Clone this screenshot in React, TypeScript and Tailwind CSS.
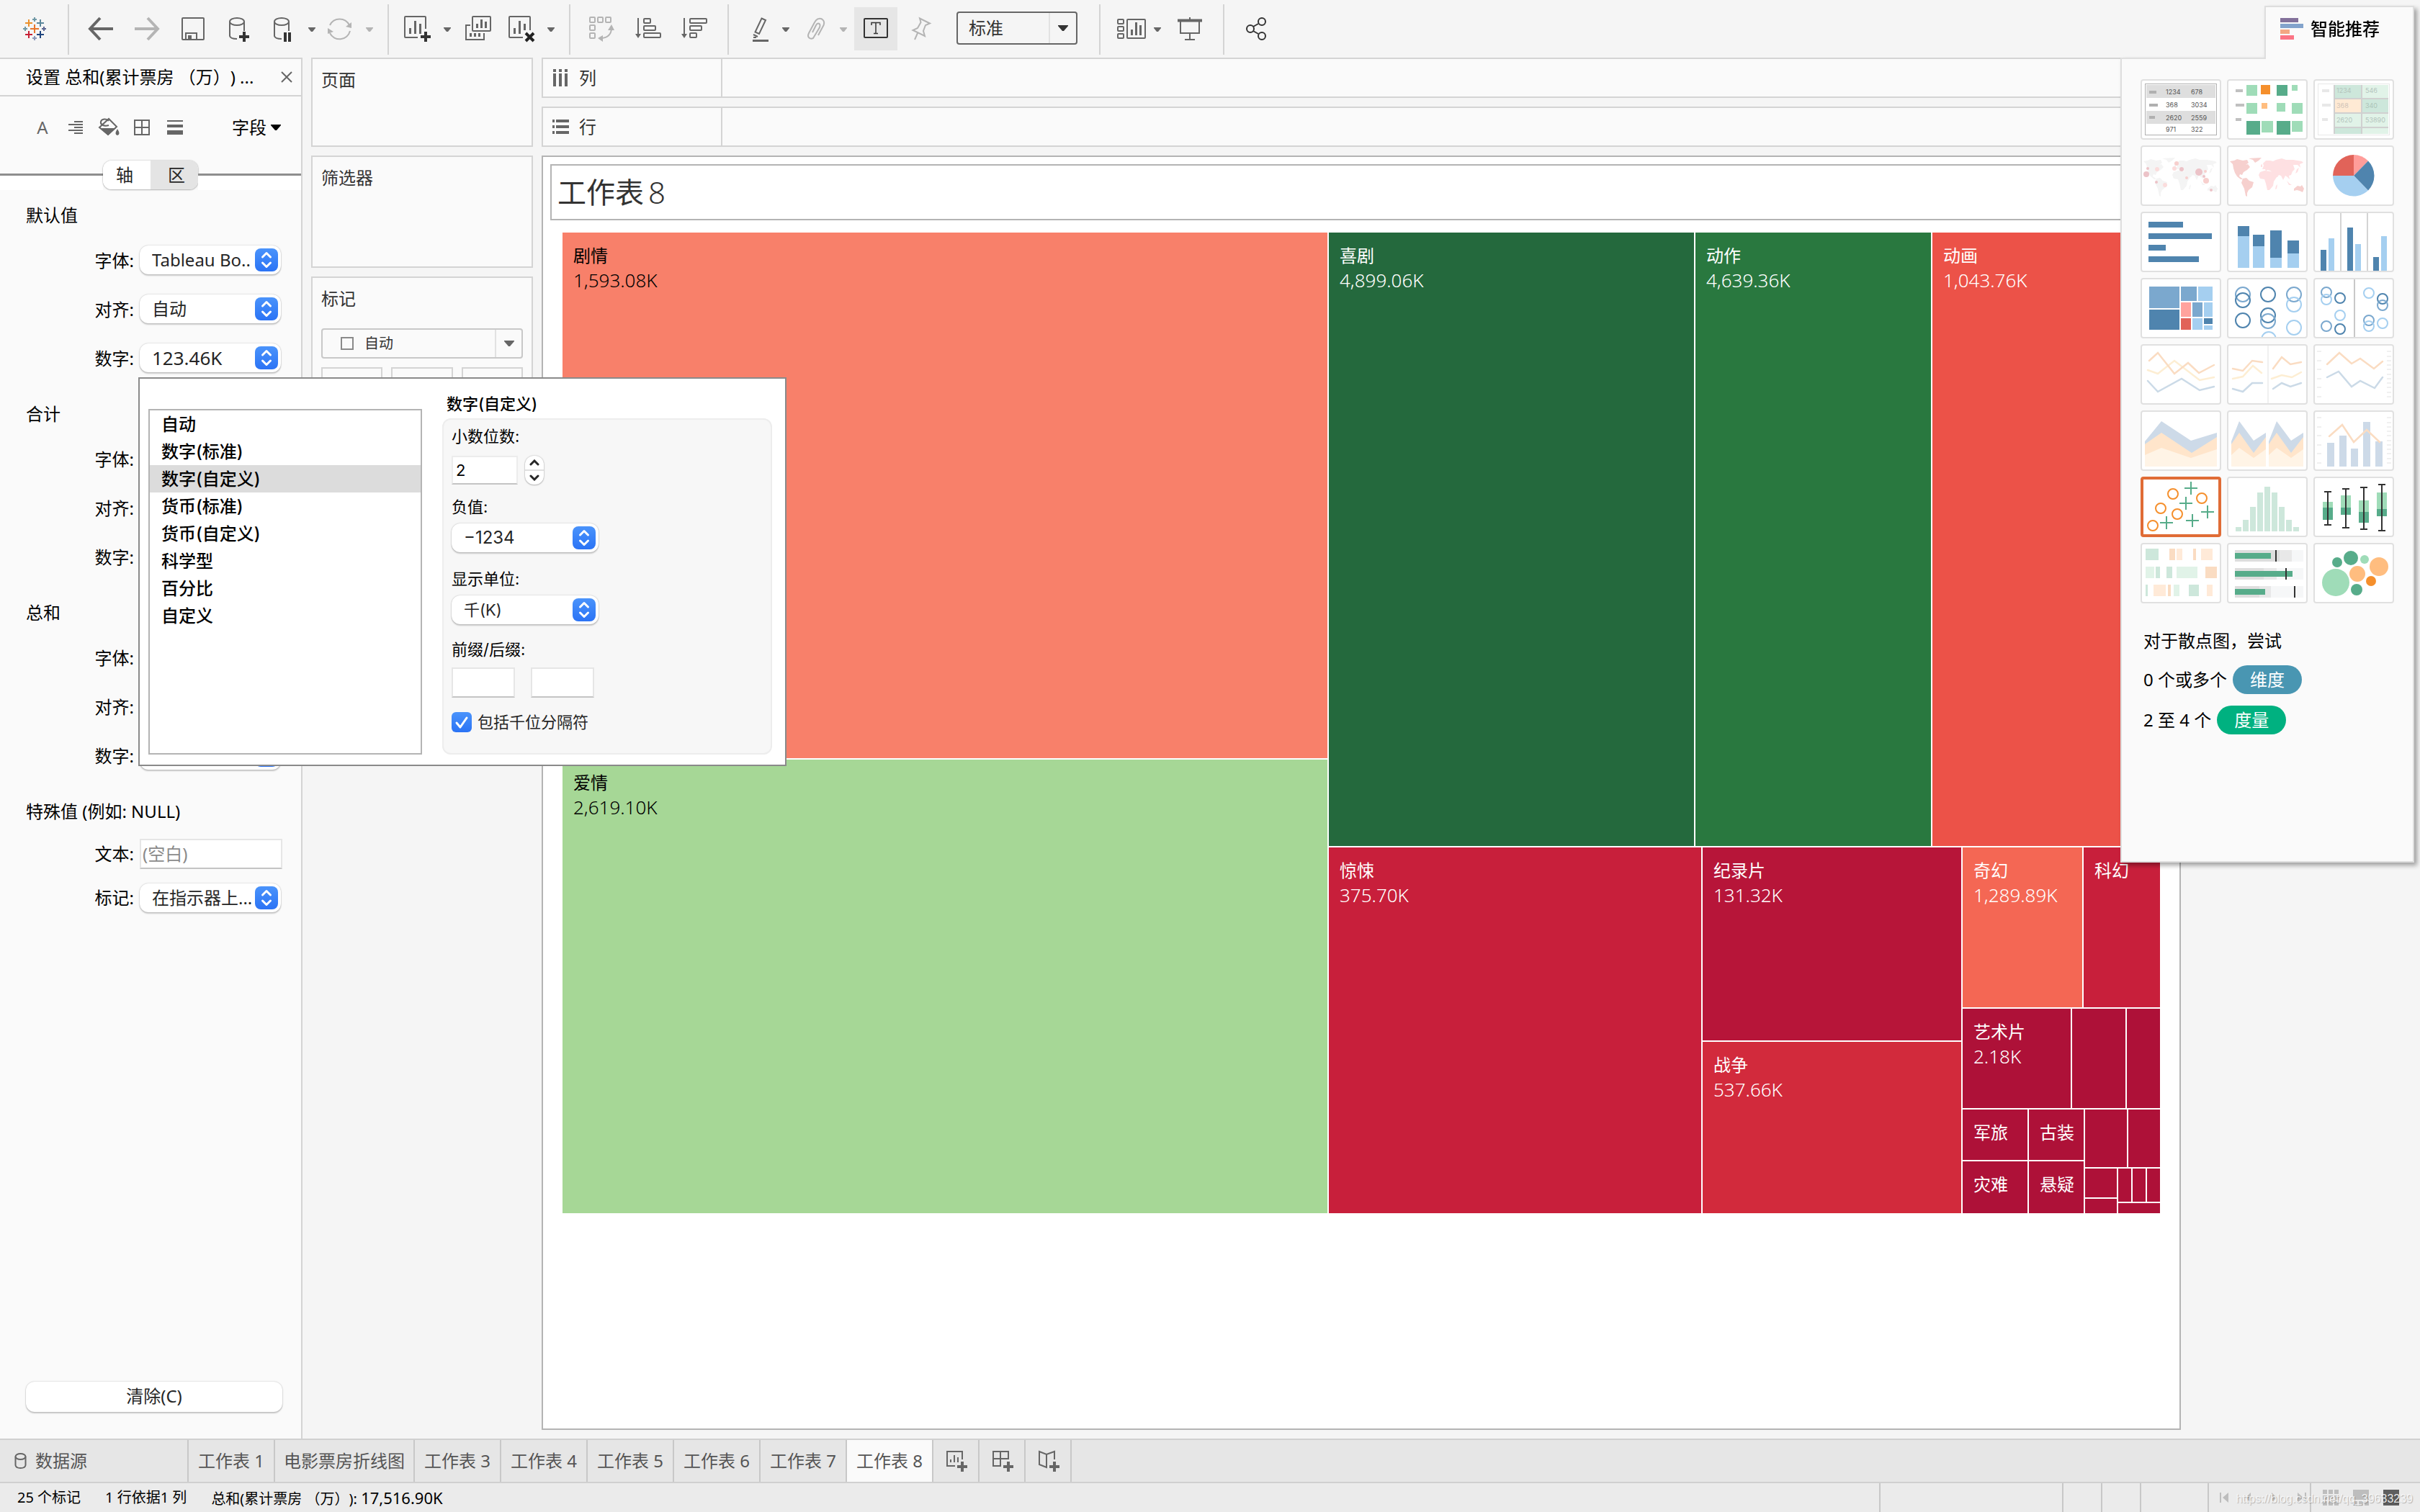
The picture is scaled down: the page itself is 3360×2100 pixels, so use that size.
import React, { useState } from 'react';

const GREY = '#666666';
const LIGHT = '#b4b4b4';
const DARK = '#333333';

/* ---------- toolbar ---------- */

function Tool({ x, w, label, active, children }: { x: number; w: number; label: string; active?: boolean; children: React.ReactNode }) {
  return (
    <button type="button" aria-label={label} className={active ? 'my-2.5 h-15 overflow-hidden bg-[#e6e6e6]' : 'h-20'}>
      <svg width={w} height={active ? 60 : 80} viewBox={active ? `${x} 10 ${w} 60` : `${x} 0 ${w} 80`} fill="none" stroke={GREY} strokeWidth="2">
        {children}
      </svg>
    </button>
  );
}

function Caret({ x, w, cx, color = GREY }: { x: number; w: number; cx: number; color?: string }) {
  return (
    <Tool x={x} w={w} label="更多选项">
      <path d={`M${cx - 5} 38h10v1l-4 5h-2l-4-5z`} fill={color} stroke="none" />
    </Tool>
  );
}

const Separator = () => <div className="mt-1.5 h-[70px] w-0.5 bg-[#d4d4d4]" />;

const logoPluses: [number, number, number, number, string][] = [
  [48, 40, 6, 2, '#e8762c'],
  [40, 32, 5, 2, '#eb912c'],
  [56, 32, 5, 2, '#5b879b'],
  [40, 48, 5, 2, '#c72035'],
  [56, 48, 5, 2, '#1f457e'],
  [48, 27, 3, 2, '#7099a6'],
  [48, 53, 3, 2, '#8b97b9'],
  [35, 40, 3, 2, '#7099a6'],
  [61, 40, 3, 2, '#5c6692'],
];

function Toolbar() {
  return (
    <header className="flex h-20 shrink-0 items-start bg-[#f5f5f5]">
      <Tool x={0} w={94} label="起始页">
        {logoPluses.map(([x, y, r, s, c]) => (
          <path key={`${x}-${y}`} d={`M${x - r} ${y}h${2 * r}M${x} ${y - r}v${2 * r}`} stroke={c} strokeWidth={s} />
        ))}
      </Tool>
      <Separator />
      <Tool x={96} w={76} label="撤消">
        <path d="M157 40H126M139 25L125 40L139 55" strokeWidth="4" />
      </Tool>
      <Tool x={172} w={64} label="重做">
        <path d="M187 40H218M205 25L219 40L205 55" strokeWidth="4" stroke={LIGHT} />
      </Tool>
      <Tool x={236} w={64} label="保存">
        <rect x="253" y="25" width="30" height="30" rx="1" />
        <path d="M258 55V46H273V55" />
        <path d="M261 49h5v5h-5z" fill={GREY} stroke="none" />
      </Tool>
      <Tool x={300} w={64} label="新建数据源">
        <ellipse cx="329" cy="30" rx="10" ry="5" />
        <path d="M319 30V50Q320 54 329 54M339 30V43" />
        <path d="M339 44v14M332 51h14" stroke={DARK} strokeWidth="4" />
      </Tool>
      <Tool x={364} w={56} label="暂停自动更新">
        <ellipse cx="391" cy="30" rx="10" ry="5" />
        <path d="M381 30V50Q382 54 391 54M401 30V43" />
        <path d="M396 45v13M402 45v13" stroke={DARK} strokeWidth="4" />
      </Tool>
      <Caret x={420} w={26} cx={433} />
      <Tool x={446} w={52} label="运行更新">
        <path d="M458 35A15 15 0 0 1 485 35M486 43A15 15 0 0 1 458 46" stroke={LIGHT} />
        <path d="M488 31v8l-8-2zM455 39v8l8-3z" fill={LIGHT} stroke="none" />
      </Tool>
      <Caret x={498} w={40} cx={513} color={LIGHT} />
      <Separator />
      <Tool x={540} w={68} label="新建工作表">
        <path d="M580 52H563Q562 52 562 51V24Q562 23 563 23H590Q591 23 591 24V40" />
        <path d="M569.500 39v8M576.500 29v18M583.500 33v14" strokeWidth="3" />
        <path d="M591 44v14M584 51h14" stroke={DARK} strokeWidth="4" />
      </Tool>
      <Caret x={608} w={26} cx={621} />
      <Tool x={634} w={60} label="复制工作表">
        <rect x="656" y="23" width="25" height="20" rx="1" />
        <path d="M662.500 33v6M668.500 27v12M674.500 30v9M653.500 46v5M659.500 46v5M665.500 46v5" strokeWidth="3" />
        <path d="M653 35H647V55H672V46" />
      </Tool>
      <Tool x={694} w={58} label="清除工作表">
        <path d="M726 52H708Q707 52 707 51V24Q707 23 708 23H735Q736 23 736 24V42" />
        <path d="M714.500 39v8M721.500 29v18M728.500 33v9" strokeWidth="3" />
        <path d="M730 46l11 11M741 46l-11 11" stroke="#222222" strokeWidth="4" />
      </Tool>
      <Caret x={752} w={38} cx={765} />
      <Separator />
      <Tool x={792} w={76} label="交换行和列">
        <g stroke={LIGHT}>
          <rect x="819" y="24" width="7" height="7" rx="1" />
          <rect x="830" y="24" width="7" height="7" rx="1" />
          <rect x="841" y="24" width="7" height="7" rx="1" />
          <rect x="819" y="35" width="7" height="7" rx="1" />
          <rect x="819" y="46" width="7" height="7" rx="1" />
          <path d="M849 40Q848 52 835 53" />
        </g>
        <path d="M849 34l4 8h-9zM830 53l7-4v9z" fill={LIGHT} stroke="none" />
      </Tool>
      <Tool x={868} w={64} label="升序排序">
        <path d="M886 25V50" />
        <path d="M882 47h8l-4 6z" fill={GREY} stroke="none" />
        <rect x="894" y="26" width="9" height="6" rx="1" />
        <rect x="894" y="36" width="16" height="6" rx="1" />
        <rect x="894" y="46" width="23" height="6" rx="1" />
      </Tool>
      <Tool x={932} w={78} label="降序排序">
        <path d="M950 25V50" />
        <path d="M946 47h8l-4 6z" fill={GREY} stroke="none" />
        <rect x="958" y="26" width="23" height="6" rx="1" />
        <rect x="958" y="36" width="16" height="6" rx="1" />
        <rect x="958" y="46" width="9" height="6" rx="1" />
      </Tool>
      <Separator />
      <Tool x={1012} w={66} label="突出显示">
        <path d="M1057.500 25.500L1063 28L1054 47L1048.500 44.500Z" />
        <path d="M1046 48l6 3M1046 52h4" />
        <path d="M1045 56.500h22" strokeWidth="3" />
      </Tool>
      <Caret x={1078} w={26} cx={1091} />
      <Tool x={1104} w={52} label="组成员">
        <path d="M1136 49L1143.500 35C1146 29 1141 25 1137 26C1134 26 1133 28 1131 31L1123 46C1120 52 1125 55 1129 53L1138 38C1140 32 1135 31 1133 35L1128 45" stroke={LIGHT} />
      </Tool>
      <Caret x={1156} w={30} cx={1171} color={LIGHT} />
      <Tool x={1186} w={60} label="显示标记标签" active>
        <rect x="1200" y="26" width="32" height="26" rx="1" stroke={DARK} />
        <path d="M1210 35v-3.500h12v3.500M1216 31.500v15M1213 46.500h6" stroke={DARK} strokeWidth="1.500" />
      </Tool>
      <Tool x={1246} w={66} label="固定轴">
        <path d="M1277 25.500L1291 32.500L1285 35L1282 43L1284 50L1267.500 42L1274 39L1278.500 31ZM1274 46L1270 55" stroke={LIGHT} />
      </Tool>
      <div className="mt-4 mr-[30px] ml-4 grid h-[46px] w-[168px] rounded-sm border-2 border-[#666666]">
        <select aria-label="适合" className="appearance-none pl-[15px] text-2xl leading-none text-[#333333] [grid-area:1/1]">
          <option>标准</option>
        </select>
        <div className="pointer-events-none flex w-[38px] items-center justify-center justify-self-end border-l-2 border-[#e2e2e2] [grid-area:1/1]">
          <svg width="14" height="8" viewBox="0 0 14 8" aria-hidden="true">
            <path d="M0 0h14v1L8 8H6L0 1z" fill={DARK} />
          </svg>
        </div>
      </div>
      <Separator />
      <Tool x={1528} w={70} label="显示/隐藏卡">
        <rect x="1552" y="27" width="8" height="6" rx="1" />
        <rect x="1552" y="37" width="8" height="6" rx="1" />
        <rect x="1552" y="47" width="8" height="6" rx="1" />
        <rect x="1565" y="27" width="25" height="26" rx="1" />
        <path d="M1571.500 41v8M1577.500 31v18M1583.500 35v14" strokeWidth="3" />
      </Tool>
      <Caret x={1598} w={24} cx={1607} />
      <Tool x={1622} w={76} label="演示模式">
        <path d="M1635 28.500h34" strokeWidth="4" />
        <path d="M1652 24v4M1639 30V46H1665V30M1652 46V54M1645 55H1659" />
      </Tool>
      <Separator />
      <Tool x={1700} w={90} label="共享">
        <g stroke={DARK}>
          <circle cx="1736" cy="40" r="5" />
          <circle cx="1752" cy="30" r="5" />
          <circle cx="1752" cy="50" r="5" />
          <path d="M1740 37L1747 33M1740 43L1747 47" />
        </g>
      </Tool>
    </header>
  );
}

/* ---------- form controls ---------- */

function Chevrons() {
  return (
    <span className="pointer-events-none mr-1 flex h-8 w-8 items-center justify-center self-center justify-self-end rounded-lg bg-linear-to-b from-[#4a93fb] to-[#2b73f5] [grid-area:1/1]">
      <svg width="16" height="24" viewBox="0 0 16 24" fill="none" stroke="#ffffff" strokeWidth="3" strokeLinecap="round" strokeLinejoin="round" aria-hidden="true">
        <path d="M2.500 8L8 2.500L13.500 8M2.500 16L8 21.500L13.500 16" />
      </svg>
    </span>
  );
}

function Select({ id, value, options = [], wide, size = 'text-2xl' }: { id: string; value: string; options?: string[]; wide?: boolean; size?: string }) {
  return (
    <div className={`grid h-10 rounded-xl bg-white shadow-[0_0_2px_rgba(0,0,0,0.28),0_2px_2px_rgba(0,0,0,0.18)] ${wide ? 'w-51' : 'w-49'}`}>
      <select id={id} className={`w-full appearance-none truncate rounded-xl pr-8 pl-[17px] leading-none text-[#262626] [grid-area:1/1] ${size}`}>
        <option>{value}</option>
        {options.map((o) => (
          <option key={o}>{o}</option>
        ))}
      </select>
      <Chevrons />
    </div>
  );
}

function Row({ label, id, children }: { label: string; id: string; children: React.ReactNode }) {
  return (
    <div className="flex h-17 items-center gap-2">
      <label htmlFor={id} className="w-[186px] pt-0.5 text-right">
        {label}
      </label>
      {children}
    </div>
  );
}

function Section({ title, name }: { title: string; name: string }) {
  return (
    <section className="pb-4">
      <h3 className="flex h-14 items-center pl-9">{title}</h3>
      <Row label="字体:" id={`${name}-font`}>
        <Select id={`${name}-font`} value="Tableau Bo.." />
      </Row>
      <Row label="对齐:" id={`${name}-align`}>
        <Select id={`${name}-align`} value="自动" />
      </Row>
      <Row label="数字:" id={`${name}-number`}>
        <Select id={`${name}-number`} value="123.46K" size="text-[26px]" />
      </Row>
    </section>
  );
}

function FormatPane() {
  return (
    <aside className="flex w-[420px] shrink-0 flex-col border-t-2 border-r-2 border-[#d4d4d4] bg-[#fafafa] text-2xl leading-none text-black">
      <div className="flex h-13 shrink-0 items-center justify-between border-b-2 border-[#d4d4d4] pr-3 pl-9">
        <h2 className="whitespace-pre">设置 总和(累计票房 （万）) ...</h2>
        <button type="button" aria-label="关闭">
          <svg width="16" height="16" viewBox="0 0 16 16" stroke={GREY} strokeWidth="2">
            <path d="M1 1l14 14M15 1L1 15" />
          </svg>
        </button>
      </div>
      <div className="flex h-[86px] shrink-0 items-center justify-between pr-7 pl-11">
        <div className="flex items-center gap-4">
          <button type="button" aria-label="字体" className="w-[30px] text-[#666666]">
            A
          </button>
          <button type="button" aria-label="对齐">
            <svg width="30" height="30" viewBox="0 0 30 30" stroke={GREY} strokeWidth="2">
              <path d="M13 7h12M5 11h20M13 15h12M5 19h20M13 23h12" />
            </svg>
          </button>
          <button type="button" aria-label="阴影">
            <svg width="30" height="30" viewBox="0 0 30 30" fill="none" stroke={GREY} strokeWidth="2">
              <path d="M2 15L15 3L26 14L14 25ZM15 12C8 14 3 11 4 7C5 3 12 2 15 6" />
              <path d="M3 16h22L14 26zM27 17q5 8 0 9q-5-1 0-9" fill={GREY} stroke="none" />
            </svg>
          </button>
          <button type="button" aria-label="边框">
            <svg width="30" height="30" viewBox="0 0 30 30" fill="none" stroke={GREY} strokeWidth="2">
              <path d="M5 5h20v20H5zM15 5v20M5 15h20" />
            </svg>
          </button>
          <button type="button" aria-label="线">
            <svg width="30" height="30" viewBox="0 0 30 30" fill={GREY}>
              <path d="M4 5h22v2H4zM4 11h22v4H4zM4 19h22v6H4z" />
            </svg>
          </button>
        </div>
        <button type="button" className="flex items-center gap-1.5">
          字段
          <svg width="14" height="8" viewBox="0 0 14 8" aria-hidden="true">
            <path d="M0 0h14v1L8 8H6L0 1z" />
          </svg>
        </button>
      </div>
      <div className="flex h-11 shrink-0">
        <div className="flex flex-1 flex-col">
          <div className="h-6 border-b-3 border-[#8e8e8e]" />
          <div className="flex-1 bg-white" />
        </div>
        <div className="mt-[3px] mb-px flex w-[132px] overflow-hidden rounded-xl bg-white text-[#262626] shadow-[0_0_2px_rgba(0,0,0,0.35),0_1px_2px_rgba(0,0,0,0.2)]">
          <button type="button" className="flex-1 bg-white pr-1.5">
            轴
          </button>
          <button type="button" className="flex-1 bg-[#e4e4e4] pl-1.5">
            区
          </button>
        </div>
        <div className="flex flex-1 flex-col">
          <div className="h-6 border-b-3 border-[#8e8e8e]" />
          <div className="flex-1 bg-white" />
        </div>
      </div>
      <div className="pt-[7px]">
        <Section title="默认值" name="default" />
        <Section title="合计" name="total" />
        <Section title="总和" name="grand" />
        <section>
          <h3 className="flex h-14 items-center pl-9">特殊值 (例如: NULL)</h3>
          <div className="flex h-[61px] items-center gap-2">
            <label htmlFor="null-text" className="w-[186px] text-right">
              文本:
            </label>
            <input
              id="null-text"
              placeholder="(空白)"
              className="h-[42px] w-[198px] border-2 border-[#e6e6e6] border-b-[#c4c4c4] bg-white px-0.5 placeholder:text-[#8a8a8a]"
            />
          </div>
          <div className="flex h-[61px] items-center gap-2">
            <label htmlFor="null-mark" className="w-[186px] text-right">
              标记:
            </label>
            <Select id="null-mark" value="在指示器上..." />
          </div>
        </section>
      </div>
      <button
        type="button"
        className="mt-auto mr-[26px] mb-[37px] ml-9 h-[42px] rounded-xl bg-white pb-0.5 text-[#262626] shadow-[0_0_2px_rgba(0,0,0,0.28),0_2px_2px_rgba(0,0,0,0.18)]"
      >
        清除(C)
      </button>
    </aside>
  );
}

/* ---------- cards and shelves ---------- */

function Card({ title, className, children }: { title: string; className: string; children?: React.ReactNode }) {
  return (
    <section className={`shrink-0 border-2 border-[#d4d4d4] bg-[#fafafa] px-3 pt-[17px] ${className}`}>
      <h3 className="leading-6">{title}</h3>
      {children}
    </section>
  );
}

function Cards() {
  return (
    <div className="flex w-[308px] shrink-0 flex-col gap-3 text-2xl text-[#333333]">
      <Card title="页面" className="h-[124px]" />
      <Card title="筛选器" className="h-[156px]" />
      <Card title="标记" className="h-[640px]">
        <div className="mt-[29px] grid h-[42px] rounded-sm border-2 border-[#c8c8c8]">
          <select aria-label="标记类型" className="appearance-none pl-[58px] text-xl leading-none text-[#333333] [grid-area:1/1]">
            <option>自动</option>
          </select>
          <div className="pointer-events-none flex items-center justify-between pl-[25px] [grid-area:1/1]">
            <span className="h-[18px] w-[18px] border-2 border-[#8a8a8a]" />
            <span className="flex h-full w-[37px] items-center justify-center border-l-2 border-[#e2e2e2]">
              <svg width="14" height="8" viewBox="0 0 14 8" aria-hidden="true">
                <path d="M0 0h14v1L8 8H6L0 1z" fill={GREY} />
              </svg>
            </span>
          </div>
        </div>
        <div className="mt-3 grid grid-cols-3 gap-3">
          <button type="button" aria-label="颜色" className="h-20 border-2 border-[#d4d4d4]" />
          <button type="button" aria-label="大小" className="h-20 border-2 border-[#d4d4d4]" />
          <button type="button" aria-label="标签" className="h-20 border-2 border-[#d4d4d4]" />
        </div>
      </Card>
    </div>
  );
}

function Shelf({ title, icon }: { title: string; icon: React.ReactNode }) {
  return (
    <div className="flex h-14 shrink-0 border-2 border-[#d4d4d4] bg-[#fafafa]">
      <div className="flex w-[249px] items-center gap-3 border-r-2 border-[#d4d4d4] pl-3 leading-none">
        {icon}
        {title}
      </div>
    </div>
  );
}

/* ---------- treemap ---------- */

type Node = { size: number; color?: string; name?: string; value?: string; dark?: boolean; dir?: 'row' | 'col'; children?: Node[] };

const DEEP = '#ae1138';
const deep = (size: number, name?: string, value?: string): Node => ({ size, color: DEEP, name, value });

const treemap: Node = {
  size: 1,
  dir: 'row',
  children: [
    {
      size: 1062,
      dir: 'col',
      children: [
        { size: 730, color: '#f8806a', name: '剧情', value: '1,593.08K', dark: true },
        { size: 630, color: '#a6d796', name: '爱情', value: '2,619.10K', dark: true },
      ],
    },
    {
      size: 1154,
      dir: 'col',
      children: [
        {
          size: 852,
          dir: 'row',
          children: [
            { size: 507, color: '#24693d', name: '喜剧', value: '4,899.06K' },
            { size: 327, color: '#29783f', name: '动作', value: '4,639.36K' },
            { size: 316, color: '#ec5248', name: '动画', value: '1,043.76K' },
          ],
        },
        {
          size: 508,
          dir: 'row',
          children: [
            { size: 517, color: '#c81f3b', name: '惊悚', value: '375.70K' },
            {
              size: 359,
              dir: 'col',
              children: [
                { size: 268, color: '#b71539', name: '纪录片', value: '131.32K' },
                { size: 238, color: '#d22a3c', name: '战争', value: '537.66K' },
              ],
            },
            {
              size: 274,
              dir: 'col',
              children: [
                {
                  size: 222,
                  dir: 'row',
                  children: [
                    { size: 166, color: '#f46754', name: '奇幻', value: '1,289.89K' },
                    { size: 106, color: '#c81f3b', name: '科幻' },
                  ],
                },
                { size: 138, dir: 'row', children: [deep(150, '艺术片', '2.18K'), deep(74), deep(46)] },
                {
                  size: 144,
                  dir: 'row',
                  children: [
                    { size: 90, dir: 'col', children: [deep(70, '军旅'), deep(72, '灾难')] },
                    { size: 76, dir: 'col', children: [deep(70, '古装'), deep(72, '悬疑')] },
                    {
                      size: 104,
                      dir: 'col',
                      children: [
                        { size: 80, dir: 'row', children: [deep(58), deep(44)] },
                        {
                          size: 62,
                          dir: 'row',
                          children: [
                            { size: 44, dir: 'col', children: [deep(40), deep(20)] },
                            {
                              size: 58,
                              dir: 'col',
                              children: [{ size: 46, dir: 'row', children: [deep(18), deep(18), deep(18)] }, deep(14)],
                            },
                          ],
                        },
                      ],
                    },
                  ],
                },
              ],
            },
          ],
        },
      ],
    },
  ],
};

function TreeNode({ node }: { node: Node }) {
  if (node.children) {
    return (
      <div className={`flex min-h-0 min-w-0 gap-0.5 ${node.dir === 'row' ? 'flex-row' : 'flex-col'}`} style={{ flex: `${node.size} 1 0px` }}>
        {node.children.map((c, i) => (
          <TreeNode key={i} node={c} />
        ))}
      </div>
    );
  }
  return (
    <div
      className={`min-h-0 min-w-0 overflow-hidden text-2xl leading-[34px] whitespace-nowrap ${node.dark ? 'text-black' : 'text-white'}`}
      style={{ flex: `${node.size} 1 0px`, backgroundColor: node.color }}
    >
      {node.name && (
        <div className="pt-[15px] pl-[15px]">
          <div>{node.name}</div>
          {node.value && <div className="text-[26px] leading-[34px] font-light">{node.value}</div>}
        </div>
      )}
    </div>
  );
}

function Worksheet() {
  return (
    <main className="mr-[332px] flex min-w-0 flex-1 flex-col gap-3 pb-3 text-2xl text-[#333333]">
      <Shelf
        title="列"
        icon={
          <svg width="26" height="28" viewBox="0 0 26 28" fill={GREY} aria-hidden="true">
            <path d="M2 2h4v4H2zM10 2h4v4h-4zM18 2h4v4h-4zM2 8h4v18H2zM10 8h4v18h-4zM18 8h4v18h-4z" />
          </svg>
        }
      />
      <Shelf
        title="行"
        icon={
          <svg width="26" height="28" viewBox="0 0 26 28" fill={GREY} aria-hidden="true">
            <path d="M1 4h3v4H1zM1 12h3v4H1zM1 20h3v4H1zM6 4h18v4H6zM6 12h18v4H6zM6 20h18v4H6z" />
          </svg>
        }
      />
      <section className="flex flex-1 flex-col border-2 border-[#b4b4b4] bg-white p-2.5">
        <h1 className="flex h-[78px] shrink-0 items-center gap-1.5 border-2 border-[#b4b4b4] pl-2 text-[40px] leading-none">
          工作表 <span className="text-[42px] font-light">8</span>
        </h1>
        <div className="mx-[17px] mt-[17px] flex h-[1362px] shrink-0">
          <TreeNode node={treemap} />
        </div>
      </section>
    </main>
  );
}

/* ---------- number format popup ---------- */

const formats = ['自动', '数字(标准)', '数字(自定义)', '货币(标准)', '货币(自定义)', '科学型', '百分比', '自定义'];

function NumberPopup() {
  const [current, setCurrent] = useState('数字(自定义)');
  return (
    <div
      role="dialog"
      aria-label="数字格式"
      className="absolute top-[524px] left-48 flex h-[540px] w-[900px] border-2 border-[#8a8a8a] bg-white pb-3.5 pl-3 font-['Inter','Noto_Sans_CJK_SC',sans-serif] text-black"
    >
      <ul className="mt-[42px] w-95 border-2 border-[#b4b4b4] text-2xl leading-none font-medium">
        {formats.map((f) => (
          <li key={f}>
            <button type="button" onClick={() => setCurrent(f)} className={`h-[38px] w-full pt-0.5 pl-4 text-left ${f === current ? 'bg-[#dcdcdc]' : ''}`}>
              {f}
            </button>
          </li>
        ))}
      </ul>
      <div className="ml-7 flex w-[458px] flex-col text-[22px] leading-none">
        <h3 className="mt-[15px] flex h-10 shrink-0 items-center pl-1.5 font-medium">{current}</h3>
        <fieldset className="flex-1 rounded-xl border-2 border-[#ededed] bg-[#f7f7f7] pl-[11px]">
          <label htmlFor="decimals" className="mt-3 block">
            小数位数:
          </label>
          <div className="mt-4 flex items-center gap-2.5">
            <input id="decimals" defaultValue="2" className="h-10 w-23 border-2 border-[#ececec] border-b-[#c4c4c4] bg-white px-1" />
            <div className="flex h-10 w-[26px] flex-col divide-y-2 divide-[#e0e0e0] rounded-xl bg-white shadow-[0_0_2px_rgba(0,0,0,0.3),0_1px_2px_rgba(0,0,0,0.2)]">
              <button type="button" aria-label="增加" className="flex flex-1 items-center justify-center">
                <svg width="14" height="9" viewBox="0 0 14 9" fill="none" stroke="#262626" strokeWidth="3" strokeLinecap="round">
                  <path d="M2 7L7 2L12 7" />
                </svg>
              </button>
              <button type="button" aria-label="减少" className="flex flex-1 items-center justify-center">
                <svg width="14" height="9" viewBox="0 0 14 9" fill="none" stroke="#262626" strokeWidth="3" strokeLinecap="round">
                  <path d="M2 2L7 7L12 2" />
                </svg>
              </button>
            </div>
          </div>
          <label htmlFor="negative" className="mt-5 mb-3 block">
            负值:
          </label>
          <Select id="negative" value="−1234" options={['1234−', '(1234)']} wide size="text-2xl" />
          <label htmlFor="unit" className="mt-[26px] mb-3 block">
            显示单位:
          </label>
          <Select id="unit" value="千(K)" options={['无', '百万(M)', '十亿(B)']} wide size="text-[22px]" />
          <label htmlFor="prefix" className="mt-6 mb-3.5 block">
            前缀/后缀:
          </label>
          <div className="flex gap-[22px]">
            <input id="prefix" aria-label="前缀" className="h-[42px] w-22 border-2 border-[#e6e6e6] border-b-[#c4c4c4] bg-white px-1" />
            <input aria-label="后缀" className="h-[42px] w-22 border-2 border-[#e6e6e6] border-b-[#c4c4c4] bg-white px-1" />
          </div>
          <label className="mt-5 flex items-center gap-2 text-[#262626]">
            <span className="grid">
              <input type="checkbox" defaultChecked className="h-7 w-7 appearance-none rounded-md bg-linear-to-b from-[#4a93fb] to-[#2b73f5] [grid-area:1/1]" />
              <svg width="28" height="28" viewBox="0 0 28 28" fill="none" stroke="#ffffff" strokeWidth="3" strokeLinecap="round" strokeLinejoin="round" className="pointer-events-none [grid-area:1/1]" aria-hidden="true">
                <path d="M7 15L12 21L21 8" />
              </svg>
            </span>
            包括千位分隔符
          </label>
        </fieldset>
      </div>
    </div>
  );
}

/* ---------- show me panel ---------- */

const BLUE = '#4f84ae';
const SKY = '#a5cff0';
const MID = '#7ba8ce';
const GREEN = '#57ac8a';
const MINT = '#9fdcb8';
const ORANGE = '#f58f2c';
const PEACH = '#ffbd7f';

type Box = [number, number, number, number, string];
const Boxes = ({ items }: { items: Box[] }) => (
  <>
    {items.map(([x, y, w, h, c], i) => (
      <rect key={i} x={x} y={y} width={w} height={h} fill={c} />
    ))}
  </>
);
type Dot = [number, number, number, string];
const Dots = ({ items }: { items: Dot[] }) => (
  <>
    {items.map(([x, y, r, c], i) => (
      <circle key={i} cx={x} cy={y} r={r} fill={c} />
    ))}
  </>
);
const Rings = ({ items, sw = 2 }: { items: Dot[]; sw?: number }) => (
  <>
    {items.map(([x, y, r, c], i) => (
      <circle key={i} cx={x} cy={y} r={r} fill="none" stroke={c} strokeWidth={sw} />
    ))}
  </>
);
const Lines = ({ items }: { items: [string, string][] }) => (
  <>
    {items.map(([d, c], i) => (
      <polyline key={i} points={d} fill="none" stroke={c} strokeWidth="2.500" strokeLinecap="round" />
    ))}
  </>
);
const Num = ({ x, y, fill, children }: { x: number; y: number; fill: string; children: string }) => (
  <text x={x} y={y} fontSize="9" fill={fill} className="font-['Inter',sans-serif]">
    {children}
  </text>
);

const mapAmericas =
  'M4 22L10 21L14 19L22 21L28 20L30 24L26 27L29 26L32 30L28 34L23 37L21 41L18 40L17 43L20 45L22 47L19 47L14 43L11 38L9 32L8 26ZM30 18L48 17L44 21L39 24L36 20ZM22 46L27 45L31 49L37 51L35 58L30 62L28 66L28 71L26 70L24 60L20 52Z';
const mapAfrica = 'M46 37L52 35L60 36L64 38L67 43L69 44L65 50L64 56L59 62L56 62L54 53L52 47L46 46L44 41ZM68 56L70 54L69 60L67 61Z';
const mapEurasia =
  'M49 33L51 28L50 25L54 21L60 21L64 22L68 20L76 18L82 20L92 20L104 22L106 24L101 26L102 31L98 27L92 27L94 33L91 36L89 41L86 42L87 47L84 44L81 42L78 48L75 42L72 41L70 44L66 44L63 38L60 35L56 34L54 36L53 33ZM47 27L49 26L49 30L47 30ZM83 49L87 53L90 55L86 55ZM97 33L100 31L98 37L95 39Z';
const mapAustralia = 'M93 60L98 56L102 57L104 55L107 60L105 65L101 63L97 62L93 63Z';

const thumbs: { label: string; art: React.ReactNode }[] = [
  {
    label: '文本表',
    art: (
      <>
        <rect x="6.500" y="6.500" width="99" height="71" fill="none" stroke="#b0b0b0" />
        <Boxes items={[[8, 8, 96, 18, '#dedede'], [8, 44, 96, 18, '#dedede'], [12, 16, 10, 4, '#b0b0b0'], [12, 34, 12, 4, '#b0b0b0'], [12, 51, 8, 4, '#b0b0b0']]} />
        <Num x={35} y={21} fill="#555555">1234</Num>
        <Num x={70} y={21} fill="#555555">678</Num>
        <Num x={35} y={39} fill="#555555">368</Num>
        <Num x={70} y={39} fill="#555555">3034</Num>
        <Num x={35} y={57} fill="#555555">2620</Num>
        <Num x={70} y={57} fill="#555555">2559</Num>
        <Num x={35} y={73} fill="#555555">971</Num>
        <Num x={70} y={73} fill="#555555">322</Num>
      </>
    ),
  },
  {
    label: '热图',
    art: (
      <Boxes
        items={[
          [12, 14, 10, 4, '#c0c0c0'], [12, 34, 12, 4, '#c0c0c0'], [12, 54, 8, 4, '#c0c0c0'],
          [27, 8, 15, 15, MINT], [47, 8, 13, 13, ORANGE], [69, 8, 15, 15, GREEN], [90, 8, 8, 8, MINT],
          [27, 33, 15, 15, MINT], [48, 33, 8, 8, PEACH], [69, 33, 12, 12, MINT], [90, 33, 15, 15, MINT],
          [27, 58, 19, 19, GREEN], [48, 58, 16, 16, MINT], [69, 58, 19, 19, GREEN], [90, 58, 15, 15, MINT],
        ]}
      />
    ),
  },
  {
    label: '突出显示表',
    art: (
      <>
        <rect x="6.500" y="6.500" width="99" height="71" fill="none" stroke="#e8e8e8" />
        <Boxes
          items={[
            [12, 14, 10, 4, '#e8e8e8'], [12, 34, 12, 4, '#e8e8e8'], [12, 54, 8, 4, '#e8e8e8'],
            [28, 8, 76, 68, '#d0d0d0'],
            [30, 8, 36, 18, '#cde7db'], [68, 8, 36, 18, '#e1f3e8'],
            [30, 28, 36, 18, '#ffead4'], [68, 28, 36, 18, '#cde7db'],
            [30, 48, 36, 18, '#e1f3e8'], [68, 48, 36, 18, '#e1f3e8'],
            [30, 68, 36, 8, '#cde7db'], [68, 68, 36, 8, '#e1f3e8'],
          ]}
        />
        <Num x={32} y={19} fill="#b4c4bc">1234</Num>
        <Num x={72} y={19} fill="#b4c4bc">546</Num>
        <Num x={32} y={40} fill="#d0c4b8">368</Num>
        <Num x={72} y={40} fill="#acc4b8">340</Num>
        <Num x={32} y={60} fill="#b4c4bc">2620</Num>
        <Num x={72} y={60} fill="#b4c4bc">53890</Num>
      </>
    ),
  },
  {
    label: '符号地图',
    art: (
      <>
        <path d={mapAmericas + mapAfrica + mapEurasia + mapAustralia} fill="#f4f4f4" />
        <Dots
          items={[
            [8, 40, 4, '#ecc3c8'], [10, 32, 2, '#ecc3c8'], [23, 33, 3, '#fbdcdc'], [22, 51, 2, '#ecc3c8'], [34, 55, 3, '#fbdcdc'],
            [50, 25, 3, '#f7cfcd'], [47, 32, 3, '#fbdcdc'], [57, 33, 3, '#ecc3c8'], [64, 45, 2, '#f7cfcd'], [81, 37, 5, '#ecc3c8'],
            [90, 36, 2, '#f7cfcd'], [88, 43, 2, '#ecc3c8'], [91, 49, 4, '#f7cfcd'], [98, 62, 2, '#ecc3c8'],
          ]}
        />
      </>
    ),
  },
  {
    label: '填充地图',
    art: (
      <>
        <path d={mapAmericas + mapAustralia} fill="#f6d0ce" />
        <path d={mapAfrica + mapEurasia} fill="#fee0e2" />
      </>
    ),
  },
  {
    label: '饼图',
    art: (
      <>
        <path d="M56 42V13A29 29 0 0 1 76 21.500Z" fill="#ff9d9a" />
        <path d="M56 42L76 21.500A29 29 0 0 1 76 62.500Z" fill={BLUE} />
        <path d="M56 42L76 62.500A29 29 0 0 1 27 42Z" fill={SKY} />
        <path d="M56 42H27A29 29 0 0 1 56 13Z" fill="#e16359" />
      </>
    ),
  },
  { label: '水平条', art: <Boxes items={[[11, 14, 48, 8, BLUE], [11, 30, 88, 8, BLUE], [11, 46, 24, 8, BLUE], [11, 62, 70, 8, BLUE]]} /> },
  {
    label: '堆叠条',
    art: (
      <Boxes
        items={[
          [15, 20, 16, 14, BLUE], [15, 34, 16, 44, SKY], [36, 32, 16, 16, BLUE], [36, 48, 16, 30, SKY],
          [60, 26, 16, 38, BLUE], [60, 64, 16, 14, SKY], [84, 40, 16, 18, BLUE], [84, 58, 16, 20, SKY],
        ]}
      />
    ),
  },
  {
    label: '并排条',
    art: (
      <Boxes
        items={[
          [37, 2, 2, 80, '#d4d4d4'], [74, 2, 2, 80, '#d4d4d4'],
          [10, 53, 8, 29, BLUE], [21, 37, 8, 45, SKY], [47, 22, 8, 60, BLUE], [58, 45, 8, 37, SKY], [83, 63, 8, 19, BLUE], [94, 34, 8, 48, SKY],
        ]}
      />
    ),
  },
  {
    label: '树状图',
    art: (
      <Boxes
        items={[
          [12, 12, 42, 30, MID], [12, 44, 42, 28, BLUE], [56, 12, 22, 20, MID], [80, 12, 20, 20, SKY],
          [56, 34, 14, 20, '#ffa39d'], [72, 34, 14, 20, MID], [88, 34, 12, 20, SKY],
          [56, 56, 14, 16, '#e16359'], [72, 56, 14, 16, SKY], [88, 56, 12, 8, BLUE], [88, 66, 12, 6, SKY],
        ]}
      />
    ),
  },
  {
    label: '圆视图',
    art: (
      <Rings
        items={[
          [22, 23, 10, MID], [22, 31, 10, BLUE], [22, 59, 10, BLUE], [57, 23, 10, BLUE], [57, 52, 10, BLUE], [57, 60, 10, MID],
          [58, 85, 10, SKY], [93, 23, 10, MID], [93, 37, 10, SKY], [93, 69, 10, SKY],
        ]}
      />
    ),
  },
  {
    label: '并排圆',
    art: (
      <>
        <Boxes items={[[56, 2, 2, 80, '#c8c8c8']]} />
        <Rings
          items={[
            [18, 20, 7, MID], [18, 30, 7, SKY], [37, 28, 7, BLUE], [37, 52, 7, SKY], [18, 67, 7, MID], [37, 71, 7, BLUE],
            [77, 21, 7, SKY], [96, 29, 7, BLUE], [96, 38, 7, MID], [77, 59, 7, MID], [77, 67, 7, SKY], [96, 63, 7, SKY],
          ]}
        />
      </>
    ),
  },
  {
    label: '连续线',
    art: (
      <Lines
        items={[
          ['10,36 24,41 47,23 82,50 102,46', '#fdeed3'],
          ['12,23 24,12 47,41 66,26 81,40 102,29', '#fadcc2'],
          ['10,51 24,66 57,48 82,64 102,59', '#cbdae7'],
        ]}
      />
    ),
  },
  {
    label: '离散线',
    art: (
      <>
        <Boxes items={[[56, 2, 2, 80, '#f0f0f0']]} />
        <Lines
          items={[
            ['8,34 22,37 35,23 49,25', '#fadcc2'], ['8,48 22,45 36,30 48,40', '#fdeed3'], ['8,62 22,66 35,54 49,54', '#cbdae7'],
            ['64,34 76,18 88,28 103,25', '#fadcc2'], ['62,48 76,43 90,46 103,39', '#fdeed3'], ['64,62 76,54 88,59 103,54', '#cbdae7'],
          ]}
        />
      </>
    ),
  },
  {
    label: '双线',
    art: (
      <>
        <path d="M5 10h6M5 23h6M5 35h6M5 48h6M5 60h6M5 73h6M102 10h6M102 17h6M102 23h6M102 29h6M102 35h6M102 42h6M102 48h6M102 54h6M102 60h6M102 67h6M102 73h6" stroke="#f0f0f0" strokeWidth="2" />
        <Lines items={[['19,28 36,12 53,27 65,20 84,34 96,24', '#fadcc2'], ['19,46 35,38 53,59 65,51 85,61 96,46', '#cbdae7']]} />
      </>
    ),
  },
  {
    label: '连续区域',
    art: (
      <>
        <path d="M6 43L29 15L70 42L106 31V78H6Z" fill="#cddae8" />
        <path d="M6 47L29 31L71 59L106 37V78H6Z" fill="#ffe5cb" />
        <path d="M6 62L29 52L70 66L106 54V78H6Z" fill="#fff4e6" />
      </>
    ),
  },
  {
    label: '离散区域',
    art: (
      <>
        <path d="M6 43L17 15L37 42L54 31V78H6ZM58 43L69 15L89 42L106 31V78H58Z" fill="#cddae8" />
        <path d="M6 47L17 31L37 59L54 37V78H6ZM58 47L69 31L89 59L106 37V78H58Z" fill="#ffe5cb" />
        <path d="M6 62L17 52L37 66L54 54V78H6ZM58 62L69 52L89 66L106 54V78H58Z" fill="#fff4e6" />
      </>
    ),
  },
  {
    label: '双组合',
    art: (
      <>
        <path d="M5 10h6M5 23h6M5 35h6M5 48h6M5 60h6M5 73h6M102 10h6M102 17h6M102 23h6M102 29h6M102 35h6M102 42h6M102 48h6M102 54h6M102 60h6M102 67h6M102 73h6" stroke="#f0f0f0" strokeWidth="2" />
        <Boxes items={[[19, 45, 10, 33, '#cddae8'], [36, 35, 10, 43, '#cddae8'], [52, 53, 10, 25, '#cddae8'], [69, 16, 10, 62, '#cddae8'], [86, 43, 10, 35, '#cddae8']]} />
        <Lines items={[['22,36 40,20 56,44 74,27 92,44', '#fadcc2']]} />
      </>
    ),
  },
  {
    label: '散点图',
    art: (
      <>
        <Rings items={[[45, 24, 7, ORANGE], [85, 30, 7, ORANGE], [28, 44, 7, ORANGE], [51, 52, 7, ORANGE], [17, 68, 7, ORANGE]]} />
        <path d="M61 16h18M70 7v18M54 37h18M63 28v18M84 49h18M93 40v18M27 64h18M36 55v18M63 61h18M72 52v18" stroke={GREEN} strokeWidth="2" />
      </>
    ),
  },
  {
    label: '直方图',
    art: (
      <Boxes
        items={[
          [12, 70, 8, 6, '#cde7db'], [22, 60, 8, 16, '#cde7db'], [32, 42, 8, 34, '#cde7db'], [42, 22, 8, 54, '#cde7db'], [52, 14, 8, 62, '#cde7db'],
          [62, 22, 8, 54, '#cde7db'], [72, 42, 8, 34, '#cde7db'], [82, 60, 8, 16, '#cde7db'], [92, 70, 8, 6, '#cde7db'],
        ]}
      />
    ),
  },
  {
    label: '盒须图',
    art: (
      <>
        <Boxes
          items={[
            [13, 35, 14, 8, MINT], [13, 43, 14, 17, GREEN], [38, 26, 14, 17, MINT], [38, 43, 14, 10, GREEN],
            [63, 33, 14, 16, MINT], [63, 49, 14, 15, GREEN], [88, 22, 14, 23, MINT], [88, 45, 14, 10, GREEN],
          ]}
        />
        <path d="M15 21h10M20 21v46M15 67h10M40 17h10M45 17v54M40 71h10M65 15h10M70 15v58M65 73h10M90 11h10M95 11v64M90 75h10" stroke={DARK} strokeWidth="2" />
      </>
    ),
  },
  {
    label: '甘特图',
    art: (
      <Boxes
        items={[
          [7, 8, 18, 16, '#cde7db'], [40, 8, 8, 16, '#fadcc2'], [50, 8, 8, 16, '#ffead8'], [73, 8, 4, 16, '#fadcc2'], [84, 8, 16, 16, '#ffead8'],
          [7, 33, 12, 16, '#e1f3e8'], [21, 33, 6, 16, '#cde7db'], [36, 33, 8, 16, '#cde7db'], [50, 33, 29, 16, '#e1f3e8'], [90, 33, 16, 16, '#fadcc2'],
          [7, 58, 3, 16, '#cde7db'], [18, 58, 17, 16, '#ffead8'], [38, 58, 4, 16, '#fadcc2'], [46, 58, 8, 16, '#e1f3e8'], [67, 58, 14, 16, '#cde7db'], [92, 58, 8, 16, '#ffead8'],
        ]}
      />
    ),
  },
  {
    label: '标靶图',
    art: (
      <Boxes
        items={[
          [11, 10, 95, 16, '#f6f7f8'], [11, 10, 79, 16, '#e8e8e8'], [11, 10, 62, 16, '#dedede'], [11, 14, 50, 8, GREEN], [67, 10, 2, 16, DARK],
          [11, 35, 95, 16, '#f6f7f8'], [11, 35, 58, 16, '#e8e8e8'], [11, 35, 40, 16, '#dedede'], [11, 39, 80, 8, GREEN], [81, 35, 2, 16, DARK],
          [11, 60, 95, 16, '#f6f7f8'], [11, 60, 50, 16, '#e8e8e8'], [11, 60, 34, 16, '#dedede'], [11, 64, 42, 8, GREEN], [93, 60, 2, 16, DARK],
        ]}
      />
    ),
  },
  {
    label: '填充气泡图',
    art: (
      <Dots
        items={[
          [33, 27, 7, GREEN], [52, 21, 10, GREEN], [71, 23, 6, MINT], [91, 33, 13, PEACH], [61, 43, 11, PEACH], [31, 55, 19, MINT], [80, 53, 7, ORANGE], [60, 65, 8, GREEN],
        ]}
      />
    ),
  },
];

function ShowMe() {
  return (
    <aside className="absolute top-2 right-2 flex w-102 flex-col text-2xl text-black drop-shadow-[4px_4px_3px_rgba(0,0,0,0.35)]">
      <button type="button" className="relative z-10 -mb-0.5 flex h-[74px] w-52 items-center gap-2.5 self-end border-2 border-b-0 border-[#dedede] bg-[#fafafa] pb-3 pl-5 leading-none font-medium">
        <svg width="32" height="30" viewBox="0 0 32 30" aria-hidden="true">
          <Boxes items={[[0, 0, 25, 6, '#83719b'], [0, 8, 32, 6, '#83a3cc'], [0, 16, 13, 6, '#f3a783'], [0, 24, 19, 6, '#fb7485']]} />
        </svg>
        智能推荐
      </button>
      <div className="h-[1118px] border-2 border-[#dedede] bg-[#fafafa] px-[26px] pt-7">
        <div className="grid grid-cols-3 gap-2">
          {thumbs.map((t) => (
            <button
              key={t.label}
              type="button"
              aria-label={t.label}
              className={`h-21 overflow-hidden rounded-sm bg-white ${t.label === '散点图' ? 'outline-4 -outline-offset-4 outline-[#e06c36]' : 'outline-2 -outline-offset-2 outline-[#e0e0e0]'}`}
            >
              <svg width="112" height="84" viewBox="0 0 112 84">
                {t.art}
              </svg>
            </button>
          ))}
        </div>
        <div className="mt-8 flex flex-col gap-4 pl-1 leading-10">
          <p className="-mb-0.5">对于散点图，尝试</p>
          <p className="flex gap-2">
            0 个或多个
            <span className="w-24 rounded-full bg-[#4996b2] text-center text-white">维度</span>
          </p>
          <p className="flex gap-2">
            2 至 4 个
            <span className="w-24 rounded-full bg-[#00b180] text-center text-white">度量</span>
          </p>
        </div>
      </div>
    </aside>
  );
}

/* ---------- bottom bars ---------- */

const sheets = ['工作表 1', '电影票房折线图', '工作表 3', '工作表 4', '工作表 5', '工作表 6', '工作表 7', '工作表 8'];

function SheetTabs() {
  return (
    <nav className="flex h-[62px] shrink-0 border-t-2 border-b-2 border-[#d0d0d0] bg-[#e6e6e6] text-2xl leading-none text-[#555555]">
      <button type="button" className="flex w-[262px] items-center gap-3 border-r-2 border-[#c8c8c8] pl-5">
        <svg width="17" height="22" viewBox="0 0 17 22" fill="none" stroke={GREY} strokeWidth="2" aria-hidden="true">
          <ellipse cx="8.500" cy="5" rx="7" ry="4" />
          <path d="M1.500 5V17Q2 21 8.500 21Q15 21 15.500 17V5" />
        </svg>
        数据源
      </button>
      {sheets.map((s) => (
        <button key={s} type="button" className={`min-w-30 border-r-2 border-[#c8c8c8] px-3 whitespace-nowrap ${s === '工作表 8' ? 'bg-[#fafafa]' : ''}`}>
          {s}
        </button>
      ))}
      <button type="button" aria-label="新建工作表标签" className="w-16 border-r-2 border-[#c8c8c8] pl-[17px]">
        <svg width="32" height="32" viewBox="0 0 32 32" fill="none" stroke={GREY} strokeWidth="2">
          <path d="M13 23H2V3H23V14" />
          <path d="M7 14v4M12 8v10M17 11v7" />
          <path d="M23 17v14M16 24h14" strokeWidth="4" />
        </svg>
      </button>
      <button type="button" aria-label="新建仪表板" className="w-16 border-r-2 border-[#c8c8c8] pl-[17px]">
        <svg width="32" height="32" viewBox="0 0 32 32" fill="none" stroke={GREY} strokeWidth="2">
          <path d="M13 23H2V3H23V13H2M12 3V23" />
          <path d="M23 17v14M16 24h14" strokeWidth="4" />
        </svg>
      </button>
      <button type="button" aria-label="新建故事" className="w-16 border-r-2 border-[#c8c8c8] pl-[17px]">
        <svg width="32" height="32" viewBox="0 0 32 32" fill="none" stroke={GREY} strokeWidth="2">
          <path d="M23 14V3L12 7L2 3V21L12 25V7" />
          <path d="M23 17v14M16 24h14" strokeWidth="4" />
        </svg>
      </button>
    </nav>
  );
}

function StatusBar() {
  return (
    <footer className="relative flex h-10 shrink-0 bg-[#ebebeb] text-xl leading-10 text-black">
      <div className="flex flex-1 gap-[34px] pl-6 whitespace-pre">
        <span>25 个标记</span>
        <span>1 行依据1 列</span>
        <span>
          总和(累计票房 （万）): <span className="text-[22px]">17,516.90K</span>
        </span>
      </div>
      <div className="w-[254px] border-l-2 border-[#c8c8c8]" />
      <div className="w-[54px] border-l-2 border-[#c8c8c8]" />
      <div className="w-[54px] border-l-2 border-[#c8c8c8]" />
      <div className="w-[94px] border-l-2 border-[#c8c8c8]" />
      <div className="flex w-[142px] items-center gap-6 border-l-2 border-[#c8c8c8] pl-[15px]">
        <button type="button" aria-label="首个">
          <svg width="12" height="14" viewBox="0 0 12 14" fill="#bdbdbd"><path d="M0 0h2v14H0zM12 0v14L4 7z" /></svg>
        </button>
        <button type="button" aria-label="上一个">
          <svg width="12" height="14" viewBox="0 0 12 14" fill="#bdbdbd"><path d="M7 0v14L0 7z" /></svg>
        </button>
        <button type="button" aria-label="下一个">
          <svg width="12" height="14" viewBox="0 0 12 14" fill="#bdbdbd"><path d="M0 0v14l7-7z" /></svg>
        </button>
        <button type="button" aria-label="末个">
          <svg width="12" height="14" viewBox="0 0 12 14" fill="#bdbdbd"><path d="M0 0v14l8-7zM10 0h2v14h-2z" /></svg>
        </button>
      </div>
      <div className="flex w-[153px] items-center gap-5 border-l-2 border-[#c8c8c8] pl-4">
        <button type="button" aria-label="工作表排序程序">
          <svg width="22" height="22" viewBox="0 0 22 22" fill="#bdbdbd"><path d="M0 0h6v6H0zM8 0h6v6H8zM16 0h6v6h-6zM0 8h6v6H0zM8 8h6v6H8zM16 8h6v6h-6zM0 16h6v6H0zM8 16h6v6H8zM16 16h6v6h-6z" /></svg>
        </button>
        <button type="button" aria-label="显示缩略图">
          <svg width="22" height="22" viewBox="0 0 22 22" fill="#bdbdbd"><path d="M0 0h22v14H0zM0 16h6v6H0zM8 16h6v6H8zM16 16h6v6h-6z" /></svg>
        </button>
        <button type="button" aria-label="显示标签">
          <svg width="22" height="22" viewBox="0 0 22 22" fill="#5e5e5e"><path d="M0 0h22v22H0z" /></svg>
        </button>
      </div>
      <span className="pointer-events-none absolute right-2.5 bottom-0 font-['Liberation_Sans',sans-serif] text-base leading-9 text-[#fafafa]/90 [text-shadow:1px_1px_1px_rgba(0,0,0,0.25)]">
        https://blog.csdn.net/qq_39633239
      </span>
    </footer>
  );
}

export default function App() {
  return (
    <div className="relative flex min-h-screen w-full flex-col bg-[#f5f5f5] font-['Noto_Sans','Noto_Sans_CJK_SC',sans-serif] [text-spacing-trim:space-all]">
      <Toolbar />
      <div className="flex flex-1 gap-3">
        <FormatPane />
        <Cards />
        <Worksheet />
      </div>
      <SheetTabs />
      <StatusBar />
      <NumberPopup />
      <ShowMe />
    </div>
  );
}
